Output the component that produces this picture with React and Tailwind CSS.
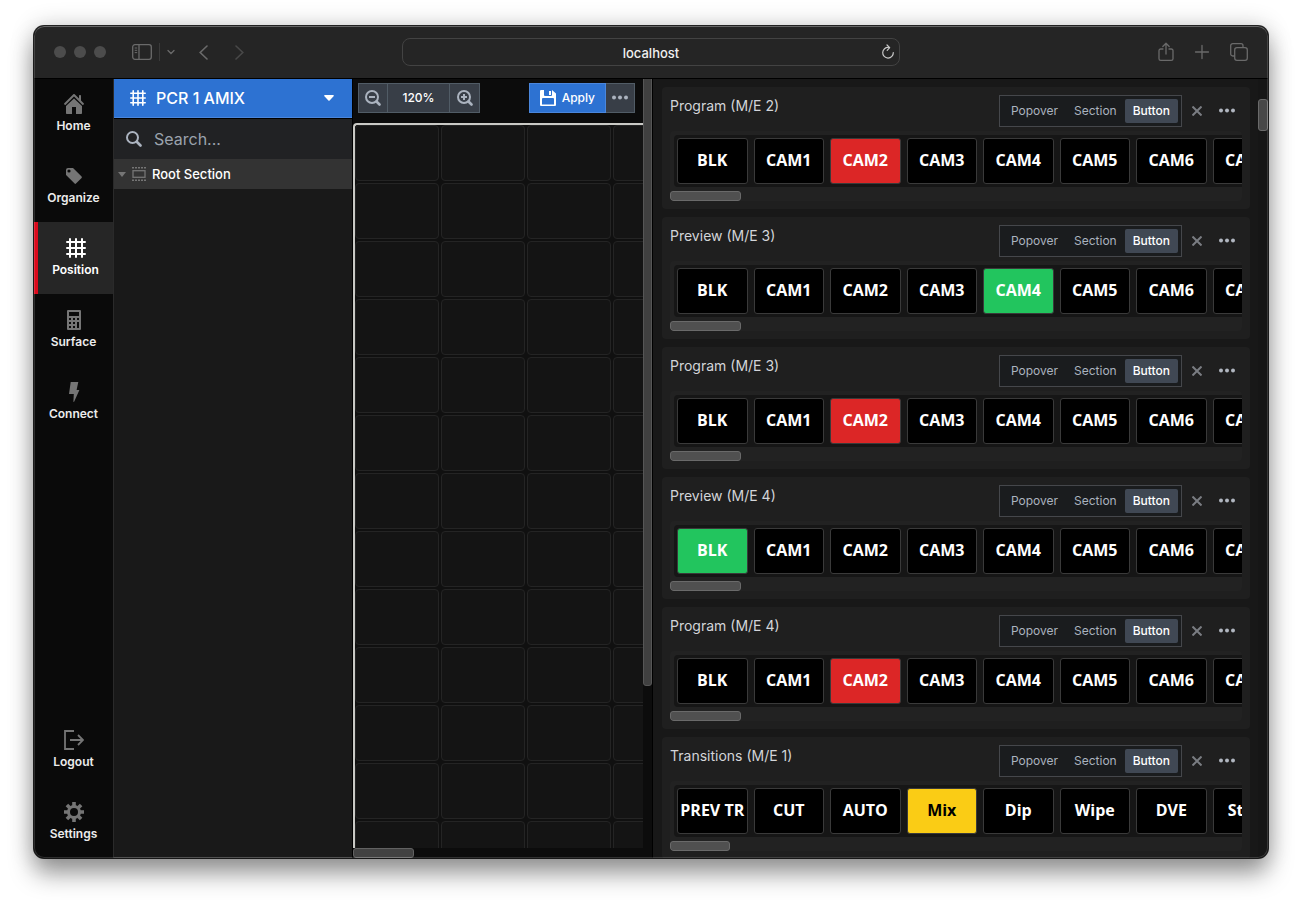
import React, { useState } from "react";

const CAMS = ["BLK", "CAM1", "CAM2", "CAM3", "CAM4", "CAM5", "CAM6", "CAM7"];
const TRANSITIONS = ["PREV TR", "CUT", "AUTO", "Mix", "Dip", "Wipe", "DVE", "Sting"];

const sections = [
	{ title: "Program (M/E 2)", buttons: CAMS, active: "CAM2", color: "bg-[#dc2626]" },
	{ title: "Preview (M/E 3)", buttons: CAMS, active: "CAM4", color: "bg-[#22c55e]" },
	{ title: "Program (M/E 3)", buttons: CAMS, active: "CAM2", color: "bg-[#dc2626]" },
	{ title: "Preview (M/E 4)", buttons: CAMS, active: "BLK", color: "bg-[#22c55e]" },
	{ title: "Program (M/E 4)", buttons: CAMS, active: "CAM2", color: "bg-[#dc2626]" },
	{ title: "Transitions (M/E 1)", buttons: TRANSITIONS, active: "Mix", color: "bg-[#facc15] text-black", short: true },
];

/* Icons */
const HomeIcon = () => (
	<svg width="20" height="20" viewBox="0 0 20 20" fill="currentColor">
		<path d="M10 4.600 2 12v7c0 .6.4 1 1 1h5v-7h4v7h5c.6 0 1-.4 1-1v-7l-8-7.400z" />
		<path d="M19.700 9.300 17 6.600V2c0-.6-.4-1-1-1s-1 .4-1 1v2.600L10.700.3a1 1 0 0 0-1.400 0l-9 9a1 1 0 0 0 1.400 1.400L10 2.400l8.300 8.300a1 1 0 0 0 1.400-1.400z" />
	</svg>
);

const TagIcon = () => (
	<svg width="20" height="20" viewBox="0 0 20 20" fill="currentColor">
		<path
			fillRule="evenodd"
			d="M2 4v4.600c0 .3.1.5.3.7l8.300 8.300c.4.4 1 .4 1.400 0l5.600-5.600c.4-.4.4-1 0-1.400L9.300 2.300A1 1 0 0 0 8.600 2H4a2 2 0 0 0-2 2zm3-.6a1.600 1.600 0 1 0 0 3.200 1.600 1.600 0 0 0 0-3.200z"
		/>
	</svg>
);

const GridIcon = ({ size = 20 }) => (
	<svg width={size} height={size} viewBox="0 0 20 20" fill="none" stroke="currentColor" strokeWidth="2" strokeLinecap="round">
		<path d="M4 1v18M10 1v18M16 1v18M1 4h18M1 10h18M1 16h18" />
	</svg>
);

const CalculatorIcon = () => (
	<svg width="20" height="20" viewBox="0 0 20 20" fill="currentColor">
		<path
			fillRule="evenodd"
			d="M4 0h12a1 1 0 0 1 1 1v18a1 1 0 0 1-1 1H4a1 1 0 0 1-1-1V1a1 1 0 0 1 1-1zM5 2v4h10V2zM5 8v2h2V8zm4 0v2h2V8zm4 0v2h2V8zM5 12v2h2v-2zm4 0v2h2v-2zm4 0v6h2v-6zM5 16v2h2v-2zm4 0v2h2v-2z"
		/>
	</svg>
);

const FlashIcon = () => (
	<svg width="20" height="20" viewBox="0 0 20 20" fill="currentColor">
		<path d="M6.700 0h7.600L12.600 8H15.400L10 20l-.6-.3.4-7.700H5z" />
	</svg>
);

const LogoutIcon = () => (
	<svg width="20" height="20" viewBox="0 0 20 20" fill="none" stroke="currentColor" strokeWidth="1.800">
		<path d="M10 1H1v18h9" />
		<path d="M6 10h12.500M14 5l5 5-5 5" />
	</svg>
);

const CogIcon = () => (
	<svg width="20" height="20" viewBox="0 0 20 20" fill="none" stroke="currentColor">
		<circle cx="10" cy="10" r="5.500" strokeWidth="3" />
		<path d="M10 0v4M10 16v4M0 10h4M16 10h4M2.900 2.900l2.800 2.800M14.300 14.300l2.800 2.800M2.900 17.100l2.800-2.800M14.300 5.700l2.800-2.800" strokeWidth="3.600" />
	</svg>
);

const SearchIcon = () => (
	<svg width="16" height="16" viewBox="0 0 16 16" fill="none" stroke="currentColor">
		<circle cx="6.500" cy="6.500" r="5.500" strokeWidth="2" />
		<path d="m11 11 3.500 3.500" strokeWidth="2.600" strokeLinecap="round" />
	</svg>
);

const ZoomIcon = ({ plus }) => (
	<svg width="16" height="16" viewBox="0 0 16 16" fill="none" stroke="currentColor">
		<circle cx="7" cy="7" r="6" strokeWidth="2" />
		<path d={plus ? "M4 7h6M7 4v6" : "M4 7h6"} strokeWidth="2" />
		<path d="m11.500 11.500 3 3" strokeWidth="2.600" strokeLinecap="round" />
	</svg>
);

const SaveIcon = () => (
	<svg width="16" height="16" viewBox="0 0 16 16" fill="currentColor">
		<path
			fillRule="evenodd"
			d="M1 0h3v5a1 1 0 0 0 1 1h6a1 1 0 0 0 1-1V0l4 3.500V15a1 1 0 0 1-1 1H1a1 1 0 0 1-1-1V1a1 1 0 0 1 1-1zm1 9v5.500h12V9a1 1 0 0 0-1-1H3a1 1 0 0 0-1 1z"
		/>
		<path d="M9 1h2v4H9z" />
	</svg>
);

const MoreIcon = () => (
	<svg width="16" height="16" viewBox="0 0 16 16" fill="currentColor">
		<circle cx="2" cy="7.500" r="2" />
		<circle cx="8" cy="7.500" r="2" />
		<circle cx="14" cy="7.500" r="2" />
	</svg>
);

const SectionIcon = () => (
	<svg width="14" height="14" viewBox="0 0 14 14" fill="none" stroke="currentColor">
		<rect x="1" y="3.700" width="12" height="6.600" strokeWidth="1.300" />
		<path d="M0 .8h14M0 13.200h14" strokeWidth="1.400" strokeDasharray="2 1" />
	</svg>
);

const ReloadIcon = () => (
	<svg width="14" height="16" viewBox="0 0 14 16" fill="none" stroke="currentColor" strokeWidth="1.200" strokeLinecap="round" strokeLinejoin="round">
		<path d="M7.500 3.500A5.300 5.300 0 1 0 12.300 8.500" />
		<path d="M6 1l2.700 2.600L6.200 6.300" />
	</svg>
);

const topNav = [
	{ name: "Home", icon: <HomeIcon /> },
	{ name: "Organize", icon: <TagIcon /> },
	{ name: "Position", icon: <GridIcon />, current: true },
	{ name: "Surface", icon: <CalculatorIcon /> },
	{ name: "Connect", icon: <FlashIcon /> },
];

const bottomNav = [
	{ name: "Logout", icon: <LogoutIcon /> },
	{ name: "Settings", icon: <CogIcon /> },
];

function NavItem({ item }) {
	return (
		<a
			href="#"
			className={`flex flex-col items-center gap-1 py-4 text-xs font-semibold ${item.current ? "bg-[#262626] border-l-4 border-[#db0a1c] text-white" : "text-[#ececec]"}`}
		>
			<span className={item.current ? "text-white" : "text-[#757575]"}>{item.icon}</span>
			{item.name}
		</a>
	);
}

function TitleBar() {
	return (
		<header className="relative z-10 flex h-[52px] shrink-0 items-center bg-[#252525] px-5 text-[#6a6a6a] shadow-[0_1px_0_#000]">
			<div className="flex flex-1 items-center">
				<div className="flex gap-2">
					<span className="h-3 w-3 rounded-full bg-[#4c4c4c]" />
					<span className="h-3 w-3 rounded-full bg-[#4c4c4c]" />
					<span className="h-3 w-3 rounded-full bg-[#4c4c4c]" />
				</div>
				<button aria-label="Sidebar" className="ml-[26px]">
					<svg width="20" height="16" viewBox="0 0 20 16" fill="none" stroke="currentColor" strokeWidth="1.300">
						<rect x=".7" y=".7" width="18.600" height="14.600" rx="2.200" />
						<path d="M7 1v14" />
						<path d="M2.700 4h2.500M2.700 6.300h2.500M2.700 8.600h2.500" strokeWidth="1" />
					</svg>
				</button>
				<span className="ml-[7px] h-[18px] w-px bg-[#3a3a3a]" />
				<button aria-label="Tab groups" className="ml-[7px]">
					<svg width="8" height="6" viewBox="0 0 8 6" fill="none" stroke="currentColor" strokeWidth="1.300" strokeLinecap="round">
						<path d="m1 1.500 3 3 3-3" />
					</svg>
				</button>
				<button aria-label="Back" className="ml-6">
					<svg width="9" height="15" viewBox="0 0 9 15" fill="none" stroke="currentColor" strokeWidth="1.600" strokeLinecap="round">
						<path d="m8 1-6.800 6.500L8 14" />
					</svg>
				</button>
				<button aria-label="Forward" className="ml-[27px] text-[#484848]">
					<svg width="9" height="15" viewBox="0 0 9 15" fill="none" stroke="currentColor" strokeWidth="1.600" strokeLinecap="round">
						<path d="m1 1 6.800 6.500L1 14" />
					</svg>
				</button>
			</div>
			<div className="flex h-7 w-[498px] items-center rounded-lg border border-[#434343] pl-[18px] pr-1">
				<input aria-label="Address" defaultValue="localhost" className="h-full min-w-0 flex-1 bg-transparent pt-px text-center text-[13px] font-medium text-[#f0f0f0] outline-none" />
				<button aria-label="Reload" className="text-[#c8c8c8]">
					<ReloadIcon />
				</button>
			</div>
			<div className="flex flex-1 items-center justify-end gap-5">
				<button aria-label="Share">
					<svg width="16" height="20" viewBox="0 0 16 20" fill="none" stroke="currentColor" strokeWidth="1.300" strokeLinecap="round" strokeLinejoin="round">
						<path d="M5 7H2.700A1.700 1.700 0 0 0 1 8.700v8A1.700 1.700 0 0 0 2.700 18.400h10.600a1.700 1.700 0 0 0 1.700-1.700v-8A1.700 1.700 0 0 0 13.300 7H11M8 12V1.500M4.800 4.500 8 1.300l3.200 3.200" />
					</svg>
				</button>
				<button aria-label="New tab">
					<svg width="16" height="16" viewBox="0 0 16 16" fill="none" stroke="currentColor" strokeWidth="1.300" strokeLinecap="round">
						<path d="M8 1.500v13M1.500 8h13" />
					</svg>
				</button>
				<button aria-label="Tab overview">
					<svg width="18" height="18" viewBox="0 0 18 18" fill="none" stroke="currentColor" strokeWidth="1.300">
						<rect x="4.700" y="4.700" width="12.600" height="12.600" rx="2.200" />
						<path d="M4.700 13H2.700a2 2 0 0 1-2-2V2.700a2 2 0 0 1 2-2H11a2 2 0 0 1 2 2v2" />
					</svg>
				</button>
			</div>
		</header>
	);
}

function SectionList() {
	return (
		<div className="flex w-[238px] shrink-0 flex-col border-b border-[#333] bg-[#191919]">
			<div className="relative h-10 shrink-0 text-white">
				<select aria-label="Surface" className="h-full w-full appearance-none border-b border-[#4a86dc] bg-[#2d72d2] pl-[42px] pr-8 text-base font-medium outline-none">
					<option>PCR 1 AMIX</option>
				</select>
				<span className="pointer-events-none absolute inset-y-0 left-4 flex items-center">
					<GridIcon size={16} />
				</span>
				<span className="pointer-events-none absolute inset-y-0 right-[18px] flex items-center">
					<svg width="10" height="6" viewBox="0 0 10 6" fill="currentColor">
						<path d="M1 0h8c.8 0 1.200.7.6 1.300L5.600 5.500a.9.9 0 0 1-1.200 0L.4 1.300C-.2.700.2 0 1 0z" />
					</svg>
				</span>
			</div>
			<label className="flex h-[41px] shrink-0 items-center gap-3 border-t border-black bg-[#212224] pl-3 text-[#abb3bf]">
				<SearchIcon />
				<input type="text" aria-label="Search" placeholder="Search..." className="min-w-0 flex-1 bg-transparent text-base outline-none placeholder:text-[#9ba2ad]" />
			</label>
			<button className="flex h-[30px] shrink-0 items-center bg-[#333] pl-1 text-[#757575]">
				<svg width="8" height="5" viewBox="0 0 8 5" fill="currentColor">
					<path d="M0 0h8L4 5z" />
				</svg>
				<span className="ml-1.5 mr-1.5">
					<SectionIcon />
				</span>
				<span className="text-[13px] leading-5 font-medium text-white">Root Section</span>
			</button>
		</div>
	);
}

function Canvas() {
	const cells = Array.from({ length: 4 * 13 });

	return (
		<div className="flex w-[301px] shrink-0 border-l border-r border-black bg-[#0c0c0c]">
			<div className="flex min-w-0 flex-1 flex-col">
				<div className="flex h-[45px] shrink-0 items-start justify-between pl-[5px] pr-2 pt-[5px] text-[#abb3bf]">
					<div className="flex h-[30px] divide-x divide-[#515c66] border border-[#515c66] bg-[#383e47]">
						<button aria-label="Zoom out" className="flex w-[29px] items-center justify-center">
							<ZoomIcon />
						</button>
						<button className="w-[62px] text-xs font-medium text-white">120%</button>
						<button aria-label="Zoom in" className="flex w-[29px] items-center justify-center">
							<ZoomIcon plus />
						</button>
					</div>
					<div className="flex h-[30px]">
						<button className="flex items-center gap-1.5 border border-[#4a86dc] bg-[#2d72d2] px-2.5 text-xs font-medium text-white">
							<SaveIcon />
							Apply
						</button>
						<button aria-label="More" className="flex w-[29px] items-center justify-center border border-l-0 border-[#515c66] bg-[#383e47]">
							<MoreIcon />
						</button>
					</div>
				</div>
				<div className="min-h-0 flex-1 overflow-hidden rounded-tl border-l-2 border-t-2 border-[#c9c9c5] bg-[#101010]">
					<div className="grid grid-cols-[repeat(4,84px)] gap-0.5">
						{cells.map((_, i) => (
							<div key={i} className="h-14 rounded-sm border border-[#242424] bg-[#141414]" />
						))}
					</div>
				</div>
				<div className="h-2.5 shrink-0">
					<div className="h-full w-[61px] rounded-[3px] border border-[#626262] bg-[#424242]" />
				</div>
			</div>
			<div className="w-[9px] shrink-0">
				<div className="h-[78%] rounded-b-[3px] border border-[#565656] bg-[#404040]" />
			</div>
		</div>
	);
}

function SectionCard({ section }) {
	const [mode, setMode] = useState("Button");

	return (
		<section className="shrink-0 rounded bg-[#1f1f1f] p-2">
			<div className="flex items-start justify-between">
				<h2 className="text-sm leading-[22px] text-[#d3d5d9]">{section.title}</h2>
				<div className="flex h-8 items-center">
					<div className="flex h-8 items-center border border-[#45474b] bg-[#1a1c1e] p-[3px] text-xs">
						{["Popover", "Section", "Button"].map((name) => (
							<button
								key={name}
								onClick={() => setMode(name)}
								className={`h-6 rounded-xs px-2 ${mode === name ? "bg-[#404854] font-medium text-white" : "text-[#abb3bf]"}`}
							>
								{name}
							</button>
						))}
					</div>
					<button aria-label="Remove" className="flex h-8 w-[30px] items-center justify-center text-[#7a7d82]">
						<svg width="10" height="10" viewBox="0 0 10 10" fill="none" stroke="currentColor" strokeWidth="2">
							<path d="m.5.5 9 9M9.500.5l-9 9" />
						</svg>
					</button>
					<button aria-label="More" className="flex h-8 w-[30px] items-center justify-center text-[#b0b6c0]">
						<MoreIcon />
					</button>
				</div>
			</div>
			<div className="mt-1 overflow-hidden rounded bg-[#222] pt-1">
				<div className="ml-1 grid w-[612px] grid-cols-8 rounded bg-[#161616] py-[3px]">
					{section.buttons.map((name) => (
						<div key={name} className="min-w-0 px-[3px]">
							<button
								className={`h-[46px] w-full overflow-hidden whitespace-nowrap rounded-[3px] border border-[#3a3a3a] pb-0.5 text-center font-['Open_Sans'] text-base font-bold ${name === section.active ? section.color : "bg-black"}`}
							>
								{name}
							</button>
						</div>
					))}
				</div>
				<div className="pt-1">
					<div className={`h-2.5 rounded-[3px] border border-[#6a6a6a] bg-[#505050] ${section.short ? "w-[60px]" : "w-[71px]"}`} />
				</div>
			</div>
		</section>
	);
}

function App() {
	return (
		<div className="h-screen bg-white px-[34px] pb-[42px] pt-[26px] font-[Inter,sans-serif] text-white">
			<div className="relative flex h-full flex-col overflow-hidden rounded-[10px] bg-[#181818] shadow-[0_0_0_1px_rgba(0,0,0,0.85),0_16px_24px_rgba(0,0,0,0.38),0_0_24px_rgba(0,0,0,0.2)]">
				<TitleBar />
				<main className="flex min-h-0 flex-1">
					<nav className="flex w-20 shrink-0 flex-col justify-between border-r border-[#2a2a2a] bg-[#0a0a0a]">
						<div>
							{topNav.map((item) => (
								<NavItem key={item.name} item={item} />
							))}
						</div>
						<div>
							{bottomNav.map((item) => (
								<NavItem key={item.name} item={item} />
							))}
						</div>
					</nav>
					<SectionList />
					<Canvas />
					<div className="flex min-w-0 flex-1 bg-[#181818]">
						<div className="flex min-w-0 flex-1 flex-col gap-2 overflow-hidden pl-[9px] pr-2 pt-[9px]">
							{sections.map((section) => (
								<SectionCard key={section.title} section={section} />
							))}
						</div>
						<div className="w-2.5 shrink-0 bg-[#161616] pt-[21px]">
							<div className="h-8 rounded-[3px] border border-[#6a6a6a] bg-[#484848]" />
						</div>
					</div>
				</main>
				{/* Window edge highlight */}
				<div className="pointer-events-none absolute inset-0 z-20 rounded-[10px] border border-white/15 border-t-white/30" />
			</div>
		</div>
	);
}

export default App;
